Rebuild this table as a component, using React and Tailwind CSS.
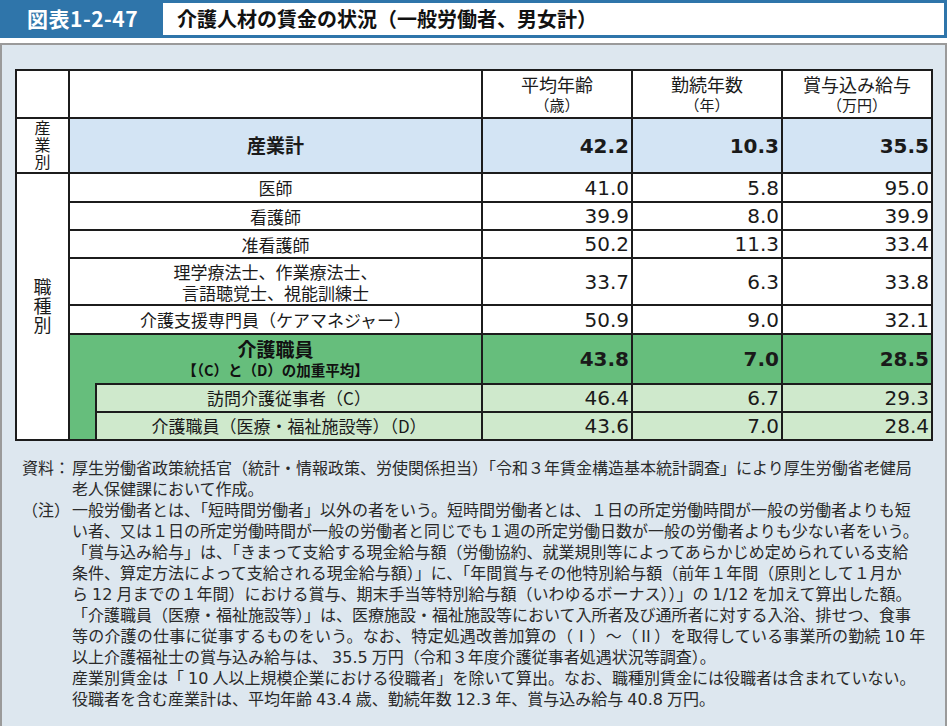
const jp = { fontFamily: '"Noto Sans CJK JP", "Noto Sans", sans-serif' };
const num = { fontFamily: '"DejaVu Sans", "Noto Sans", sans-serif' };

const bd = "border-r-2 border-b-2 border-[#1c1c1c]";

const jobs = [
  { label: "医師", v: ["41.0", "5.8", "95.0"], h: "h-[29px]" },
  { label: "看護師", v: ["39.9", "8.0", "39.9"], h: "h-[28px]" },
  { label: "准看護師", v: ["50.2", "11.3", "33.4"], h: "h-[28px]" },
  {
    label: (
      <>
        理学療法士、作業療法士、
        <br />
        言語聴覚士、視能訓練士
      </>
    ),
    v: ["33.7", "6.3", "33.8"],
    h: "h-[47px]",
  },
  { label: "介護支援専門員（ケアマネジャー）", v: ["50.9", "9.0", "32.1"], h: "h-[29px]" },
];

const notes = [
  ["資料：", "厚生労働省政策統括官（統計・情報政策、労使関係担当）「令和３年賃金構造基本統計調査」により厚生労働省老健局"],
  ["", "老人保健課において作成。"],
  ["（注）", "一般労働者とは、「短時間労働者」以外の者をいう。短時間労働者とは、１日の所定労働時間が一般の労働者よりも短"],
  ["", "い者、又は１日の所定労働時間が一般の労働者と同じでも１週の所定労働日数が一般の労働者よりも少ない者をいう。"],
  ["", "「賞与込み給与」は、「きまって支給する現金給与額（労働協約、就業規則等によってあらかじめ定められている支給"],
  ["", "条件、算定方法によって支給される現金給与額）」に、「年間賞与その他特別給与額（前年１年間（原則として１月か"],
  ["", "ら12月までの１年間）における賞与、期末手当等特別給与額（いわゆるボーナス））」の1/12を加えて算出した額。"],
  ["", "「介護職員（医療・福祉施設等）」は、医療施設・福祉施設等において入所者及び通所者に対する入浴、排せつ、食事"],
  ["", "等の介護の仕事に従事するものをいう。なお、特定処遇改善加算の（Ⅰ）～（Ⅱ）を取得している事業所の勤続10年"],
  ["", "以上介護福祉士の賞与込み給与は、35.5万円（令和３年度介護従事者処遇状況等調査）。"],
  ["", "産業別賃金は「10人以上規模企業における役職者」を除いて算出。なお、職種別賃金には役職者は含まれていない。"],
  ["", "役職者を含む産業計は、平均年齢43.4歳、勤続年数12.3年、賞与込み給与40.8万円。"],
];

// half-width digit runs are set a bit wider, as in the printed source
function NoteText({ text }) {
  return text.split(/([0-9./]+)/).map((part, i) =>
    /^[0-9./]+$/.test(part) ? (
      <span key={i} style={num} className="mx-[4px] text-[16px] leading-none">
        {part}
      </span>
    ) : (
      <span key={i}>{part}</span>
    )
  );
}

function Nums({ v, bold, extra = "" }) {
  return v.map((n, i) => (
    <td
      key={i}
      style={num}
      className={`${extra} text-right align-middle pr-[2px] text-[20px] leading-none text-[#1a1a1a] ${
        bold ? "font-bold" : ""
      }`}
    >
      {n}
    </td>
  ));
}

function VLabel({ text, size }) {
  return (
    <div className="flex justify-center">
      <div
        className={`[writing-mode:vertical-rl] [text-orientation:upright] ${size} leading-none tracking-[1px] text-[#1a1a1a]`}
      >
        {text}
      </div>
    </div>
  );
}

export default function App() {
  return (
    <div className="w-[947px] h-[726px] bg-white" style={jp}>
      <div className="flex h-[38px] bg-[#2f75aa] pt-[3px] pb-[3px] pr-[3px]">
        <div className="w-[163px] flex items-center pl-[27px] text-white font-bold text-[21px] tracking-[0.5px]">
          図表1-2-47
        </div>
        <div className="flex-1 bg-white flex items-center pl-[14px] text-[20px] font-bold text-[#111]">
          介護人材の賃金の状況（一般労働者、男女計）
        </div>
      </div>

      <div className="mt-[5px] h-[683px] border-2 border-b-0 border-[#9a9a9a] bg-[#dde7ef] pl-[13px] pr-[11px] pt-[24px]">
        <table className="table-fixed w-[918px] border-separate border-spacing-0 border-t-2 border-l-2 border-[#1c1c1c] bg-white">
          <colgroup>
            <col className="w-[53px]" />
            <col className="w-[27px]" />
            <col className="w-[386px]" />
            <col className="w-[150px]" />
            <col className="w-[150px]" />
            <col className="w-[150px]" />
          </colgroup>
          <tbody>
            <tr className="h-[48px]">
              <td className={bd}></td>
              <td colSpan={2} className={bd}></td>
              {[
                ["平均年齢", "（歳）"],
                ["勤続年数", "（年）"],
                ["賞与込み給与", "（万円）"],
              ].map(([a, b]) => (
                <td key={a} className={`${bd} align-top text-center pt-[2px] text-[#1a1a1a]`}>
                  <div className="text-[18px] leading-[22px]">{a}</div>
                  <div className="text-[15px] leading-[20px]">{b}</div>
                </td>
              ))}
            </tr>

            <tr className="h-[55px]">
              <td className={`${bd} align-middle leading-none`}>
                <VLabel text="産業別" size="text-[16px]" />
              </td>
              <td colSpan={2} className={`${bd} bg-[#d3e4f4] text-center text-[19px] font-bold text-[#1a1a1a]`}>
                産業計
              </td>
              <Nums v={["42.2", "10.3", "35.5"]} bold extra={`${bd} bg-[#d3e4f4]`} />
            </tr>

            {jobs.map((j, idx) => (
              <tr key={idx} className={j.h}>
                {idx === 0 && (
                  <td rowSpan={8} className={`${bd} align-middle leading-none`}>
                    <VLabel text="職種別" size="text-[18px]" />
                  </td>
                )}
                <td colSpan={2} className={`${bd} text-center text-[17px] leading-[21px] text-[#1a1a1a]`}>
                  {j.label}
                </td>
                <Nums v={j.v} extra={bd} />
              </tr>
            ))}

            <tr className="h-[48px]">
              <td
                colSpan={2}
                className="border-r-2 border-[#1c1c1c] bg-[#66be7c] text-center align-middle text-[#111] font-bold"
              >
                <div className="text-[19px] leading-[22px]">介護職員</div>
                <div className="text-[14.5px] leading-[20px]">【（C）と（D）の加重平均】</div>
              </td>
              <Nums v={["43.8", "7.0", "28.5"]} bold extra="border-r-2 border-[#1c1c1c] bg-[#66be7c]" />
            </tr>

            <tr className="h-[29px]">
              <td rowSpan={2} className={`${bd} bg-[#66be7c]`}></td>
              <td className={`${bd} border-t-2 bg-[#cfe9cc] text-center text-[17px] text-[#1a1a1a]`}>
                訪問介護従事者（C）
              </td>
              <Nums v={["46.4", "6.7", "29.3"]} extra={`${bd} border-t-2 bg-[#cfe9cc]`} />
            </tr>
            <tr className="h-[28px]">
              <td className={`${bd} bg-[#cfe9cc] text-center text-[17px] text-[#1a1a1a]`}>
                介護職員（医療・福祉施設等）（D）
              </td>
              <Nums v={["43.6", "7.0", "28.4"]} extra={`${bd} bg-[#cfe9cc]`} />
            </tr>
          </tbody>
        </table>

        <div className="mt-[16px] text-[16px] leading-[21px] text-[#2a2a2a]">
          {notes.map(([lab, txt], i) => (
            <div key={i} className="flex h-[21px] items-center whitespace-nowrap">
              <div className="w-[57px] shrink-0 pl-[7px]">{lab}</div>
              <div className={i === 8 ? "tracking-[0.2px]" : ""}>
                <NoteText text={txt} />
              </div>
            </div>
          ))}
        </div>
      </div>
    </div>
  );
}
